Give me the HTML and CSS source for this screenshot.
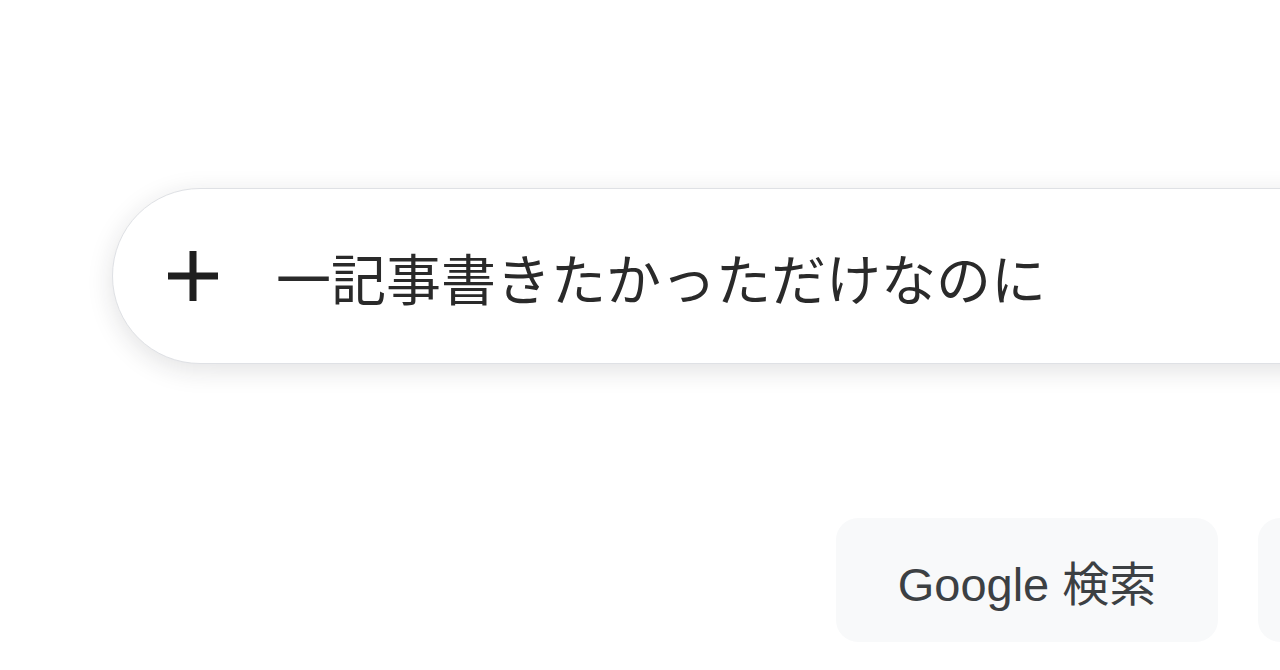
FILE: index.html
```html
<!DOCTYPE html>
<html lang="ja">
<head>
    <meta charset="utf-8">
    <meta name="viewport" content="width=device-width, initial-scale=1">
    <title>Google</title>
    <link rel="stylesheet" href="styles.css">
</head>
<body>

<div class="g-page">
    <div class="g-search">
        <span class="g-search-add">
            <svg width="52" height="52" viewBox="0 0 52 52">
                <path d="M26 1v50M1 26h50" stroke="#1f1f1f" stroke-width="7" fill="none"/>
            </svg>
        </span>
        <span class="g-search-text">一記事書きたかっただけなのに</span>
    </div>

    <div class="g-btns">
        <button class="g-btn">Google 検索</button>
        <!-- second button only shows its left edge -->
        <button class="g-btn g-btn-lucky" aria-label="I'm Feeling Lucky"></button>
    </div>
</div>

</body>
</html>
```

FILE: styles.css
```css
html, body {
    margin: 0;
    padding: 0;
    background: #fff;
    overflow: hidden;
}

body {
    width: 1280px;
    height: 670px;
    font-family: "Liberation Sans", "Noto Sans CJK JP", sans-serif;
    color: #202124;
}

.g-page {
    padding-top: 188px;
}

/* search box */
.g-search {
    display: flex;
    align-items: center;
    box-sizing: border-box;
    width: 1500px;
    height: 176px;
    margin-left: 112px;
    padding-left: 54px;
    border: 1.5px solid #dfe1e5;
    border-radius: 88px;
    background: #fff;
    box-shadow: 0 6px 26px rgba(32, 33, 36, 0.13);
}

.g-search-add {
    display: flex;
    width: 52px;
    height: 52px;
}

.g-search-text {
    margin-left: 57px;
    font-family: "Noto Sans CJK JP", sans-serif;
    font-size: 55px;
    line-height: 1;
    color: #2a2a2a;
    white-space: nowrap;
}

/* buttons */
.g-btns {
    display: flex;
    gap: 40px;
    margin-top: 154px;
    padding-left: 836px;
}

.g-btn {
    flex: none;
    box-sizing: border-box;
    width: 382px;
    height: 124px;
    border: 0;
    border-radius: 22px;
    background: #f8f9fa;
    font-family: "Liberation Sans", "Noto Sans CJK JP", sans-serif;
    font-size: 47px;
    color: #3c4043;
    white-space: nowrap;
}

.g-btn-lucky {
    width: 560px;
}
```
